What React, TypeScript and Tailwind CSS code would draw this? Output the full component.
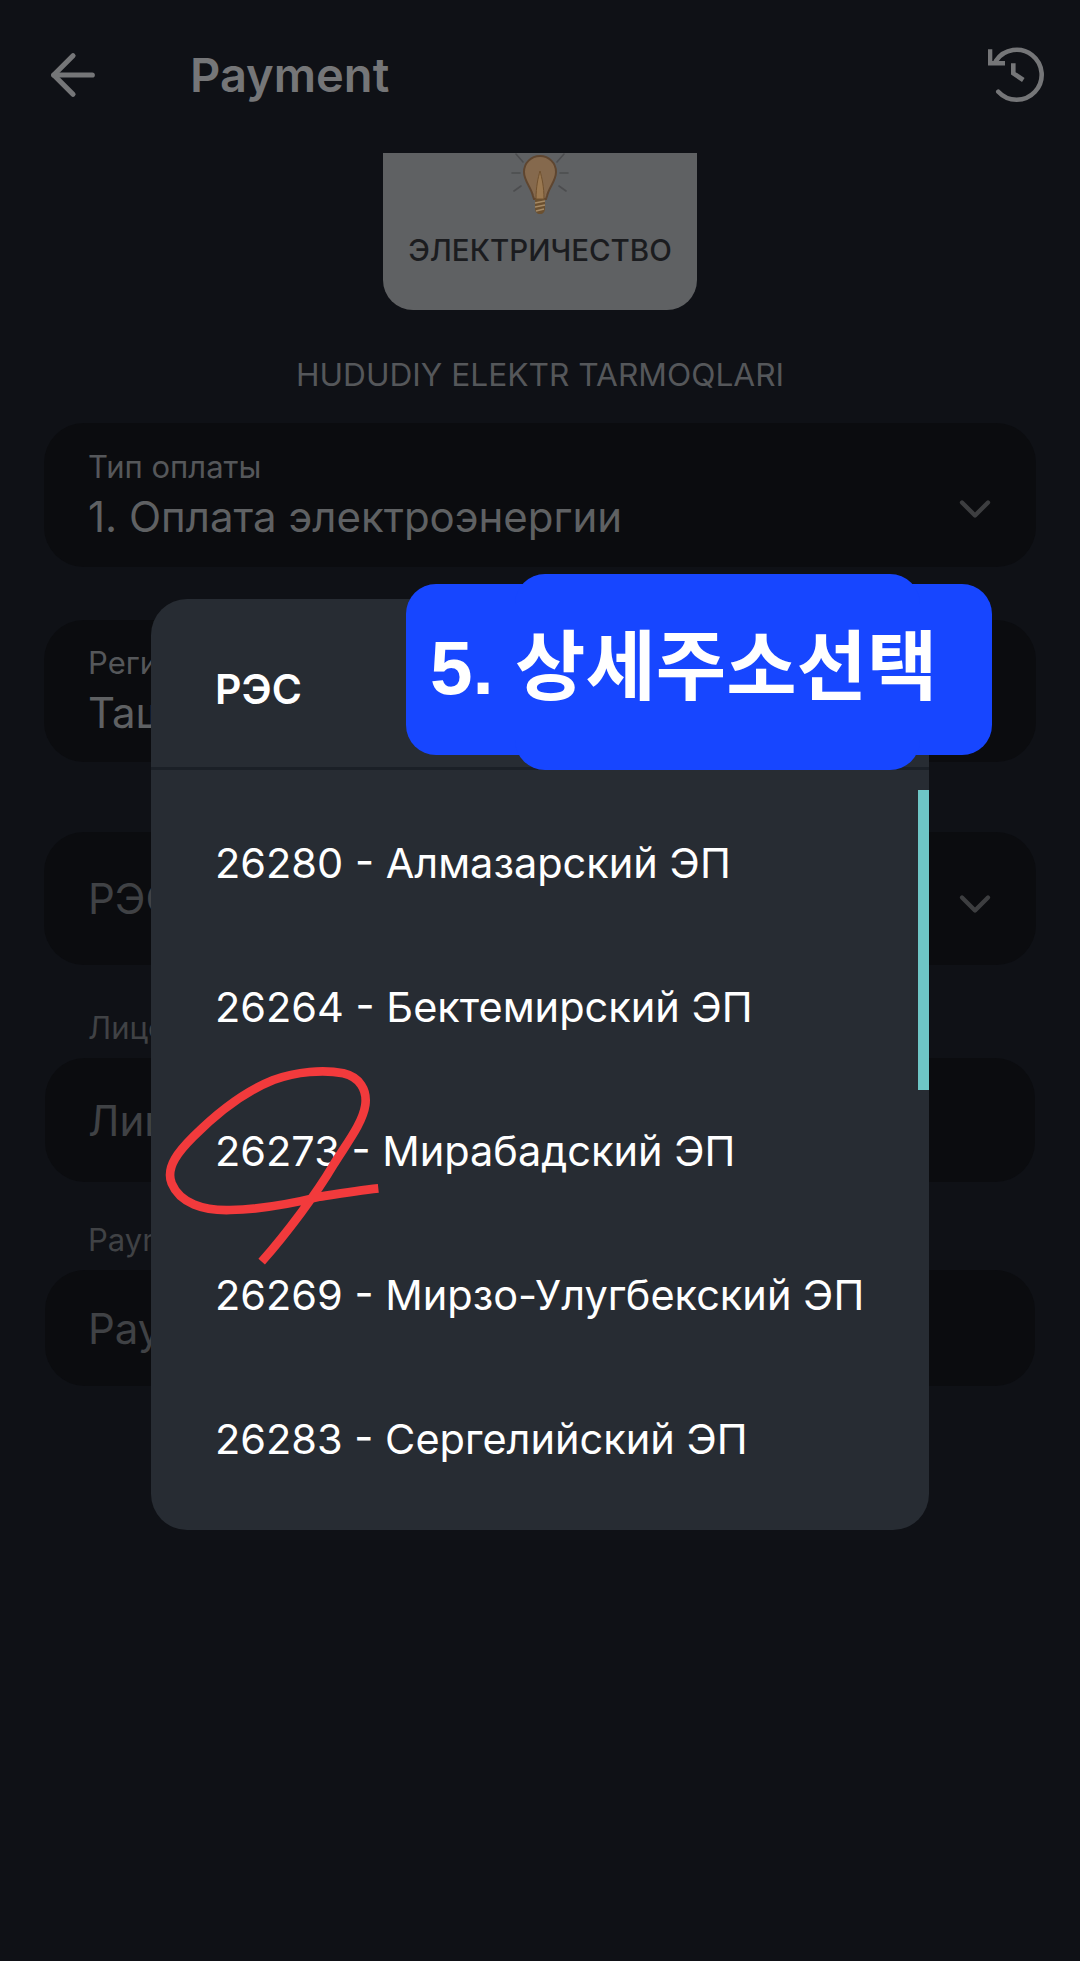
import { ArrowLeft, ChevronDown } from "lucide-react";

const districts = [
  "26280 - Алмазарский ЭП",
  "26264 - Бектемирский ЭП",
  "26273 - Мирабадский ЭП",
  "26269 - Мирзо-Улугбекский ЭП",
  "26283 - Сергелийский ЭП",
];

const Bulb = () => (
  <svg width="60" height="66" viewBox="0 0 60 66" fill="none" className="-mt-[2px]">
    <g stroke="#4c4d4f" strokeWidth="1.6" strokeLinecap="round">
      <path d="M2 22h8M50 22h8M4 40l7-5M56 40l-7-5M6 3l7 8M54 3l-7 8" />
    </g>
    <path
      d="M30 5c-9 0-16 7-16 16 0 9 7 15 9 24l1 3h12l1-3c2-9 9-15 9-24 0-9-7-16-16-16z"
      fill="#85694d"
      stroke="#5f4630"
      strokeWidth="2"
    />
    <path d="M30 20c-2 7-4 16-4 28h8c0-12-2-21-4-28z" fill="#9a7850" stroke="#70512f" strokeWidth="1" />
    <path d="M25 48h10v9c0 4-2 6-5 6s-5-2-5-6z" fill="#6b5030" />
    <path d="M25 52l10-2M25 56l10-2M26 60l8-2" stroke="#a58a66" strokeWidth="1.4" />
  </svg>
);

const HistoryIcon = () => (
  <svg width="60" height="60" viewBox="28 15 60 60" fill="none" stroke="#757678" strokeWidth="4.6">
    <path d="M36 30.7A25 25 0 1 1 38.3 61.7" strokeLinecap="round" />
    <path d="M30 19.3V33.3H45" />
    <path d="M53.3 33.3V43.3L63.3 50" />
  </svg>
);

const Field = ({ label, value, className }: { label?: string; value: string; className: string }) => (
  <div className={`-mx-[1px] flex items-center justify-between rounded-[40px] bg-[#0b0c0f] pl-[44px] pr-[35px] ${className}`}>
    <div className={`flex flex-col ${label ? "pt-[5px]" : ""}`}>
      {label && <span className="text-[31px] leading-[38px] text-[#55575a]">{label}</span>}
      <span className={`text-[42px] leading-[62px] ${label ? "text-[#5f6163]" : "text-[#404245]"}`}>{value}</span>
    </div>
    <ChevronDown size={52} strokeWidth={2} className={`text-[#3d3e40] ${label ? "mt-[28px]" : "mt-[10px]"}`} />
  </div>
);

const PlainField = ({ value, className }: { value: string; className: string }) => (
  <div className={`flex items-center rounded-[40px] bg-[#0b0c0f] pl-[43px] ${className}`}>
    <span className="text-[42px] text-[#404245]">{value}</span>
  </div>
);

export default function App() {
  return (
    <div className="relative h-[1961px] w-[1080px] overflow-hidden bg-[#0f1116] [font-family:Inter,sans-serif]">
      <header className="flex h-[150px] items-center justify-between pl-[40px] pr-[32px]">
        <div className="flex items-center">
          <ArrowLeft size={66} strokeWidth={1.9} className="text-[#757678]" />
          <h1 className="ml-[84px] text-[47px] font-semibold text-[#757678]">Payment</h1>
        </div>
        <HistoryIcon />
      </header>

      <div className="mt-[3px] flex flex-col px-[45px]">
        <div className="mx-auto flex h-[157px] w-[314px] flex-col items-center overflow-hidden rounded-b-[30px] bg-[#5f6163]">
          <Bulb />
          <span className="mt-[15px] text-[29.5px] font-medium leading-[36px] text-[#1b1c1f]">ЭЛЕКТРИЧЕСТВО</span>
        </div>
        <p className="mt-[45px] text-center text-[31.7px] leading-[40px] text-[#55575a]">HUDUDIY ELEKTR TARMOQLARI</p>

        <Field label="Тип оплаты" value="1. Оплата электроэнергии" className="mt-[28px] h-[144px]" />
        <Field label="Регион" value="Ташкент" className="mt-[53px] h-[142px]" />
        <Field value="РЭС" className="mt-[70px] h-[133px]" />

        <span className="ml-[43px] mt-[46px] text-[31px] leading-[34px] text-[#404245]">Лицевой счет</span>
        <PlainField value="Лицевой счет" className="mt-[13px] h-[124px]" />
        <span className="ml-[43px] mt-[41px] text-[31px] leading-[34px] text-[#404245]">Payment</span>
        <PlainField value="Payment" className="mt-[13px] h-[116px]" />
      </div>

      {/* dialog */}
      <div className="absolute left-[151px] top-[599px] h-[931px] w-[778px] overflow-hidden rounded-[36px] bg-[#272c33]">
        <div className="flex h-[171px] items-center border-b-[3px] border-[#1b2027] pl-[64px] pt-[13px]">
          <span className="text-[41px] font-semibold text-white">РЭС</span>
        </div>
        <div className="relative flex flex-col pt-[21px]">
          {districts.map((d) => (
            <div key={d} className="flex h-[144px] items-center pl-[64px] text-[41.5px] text-white">
              {d}
            </div>
          ))}
          <div className="absolute right-0 top-[20px] h-[300px] w-[11px] bg-[#6ec6c6]" />
        </div>
      </div>

      {/* annotation label */}
      <div className="absolute left-[406px] top-[584px] h-[171px] w-[586px] rounded-[30px] bg-[#1746ff]" />
      <div className="absolute left-[515px] top-[574px] h-[196px] w-[405px] rounded-[30px] bg-[#1746ff]" />
      <div className="absolute left-[430px] top-[623px] text-[76.5px] font-bold leading-[90px] text-white [font-family:'Liberation_Sans','Noto_Sans_CJK_KR',sans-serif]">
        5. 상세주소선택
      </div>

      {/* red scribble */}
      <svg className="absolute left-[130px] top-[1040px]" width="300" height="240" viewBox="0 0 900 720" fill="none">
        <path
          d="M745 445C680 452 620 462 570 470C490 490 400 508 300 510C220 512 150 490 125 430C105 380 150 330 190 290C250 230 330 160 430 120C500 95 580 88 640 100C690 112 712 150 706 195C698 250 650 310 610 375C560 460 470 580 395 665"
          stroke="#f23a3c"
          strokeWidth="26"
        />
      </svg>
    </div>
  );
}
